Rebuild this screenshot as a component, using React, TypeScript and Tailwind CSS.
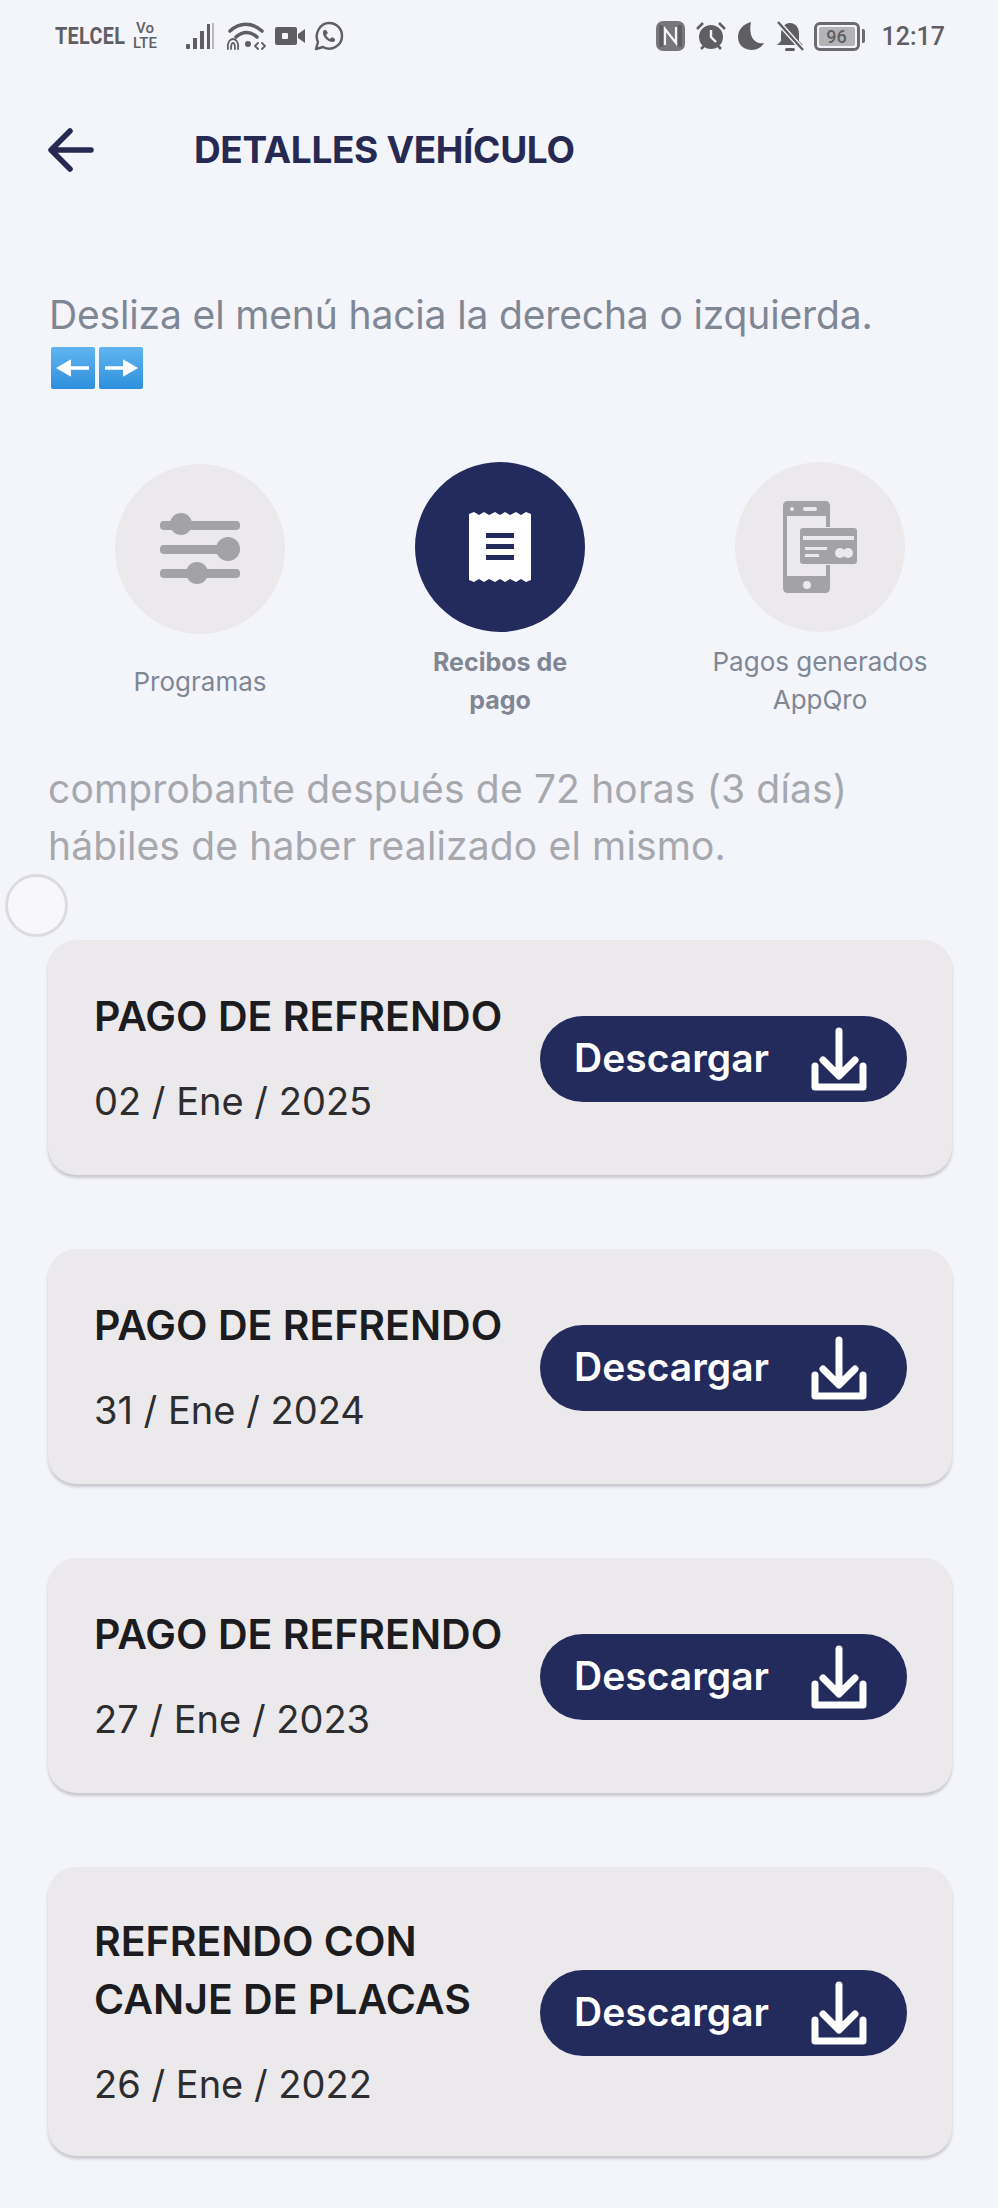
const navy = 'bg-[#232a5c]';

function StatusLeft() {
  return (
    <div className="flex items-center text-[#5f5f63]">
      <span className="w-[71px] origin-left scale-x-[0.86] text-[23px] leading-none font-bold font-['Roboto',sans-serif] tracking-[0.4px]">TELCEL</span>
      <div className="ml-[6px] flex w-[26px] flex-col items-center text-[15px] leading-[15px] font-medium font-['Roboto',sans-serif]">
        <span>Vo</span>
        <span>LTE</span>
      </div>
      <svg className="ml-[28px] h-[30px] w-[30px]" viewBox="0 0 30 30" fill="currentColor">
        <rect x="0" y="23" width="4" height="5" rx="1" />
        <rect x="7" y="17" width="4" height="11" />
        <rect x="14" y="10" width="4" height="18" />
        <rect x="21" y="3" width="3" height="25" />
        <rect x="26" y="2" width="2" height="26" opacity="0.4" />
      </svg>
      <svg className="ml-[9px] h-[32px] w-[42px]" viewBox="0 0 42 32" fill="none" stroke="currentColor" strokeWidth="3.6" strokeLinecap="round">
        <path d="M5 11C15 2 27 2 37 11" />
        <path d="M11 17C18 11 25 11 32 17" />
        <circle cx="23" cy="24" r="3" fill="currentColor" stroke="none" />
        <path d="M3 29C2 22 5 19 8 19S14 22 13 29" strokeWidth="1.8" />
        <path d="M6 29C6 25 7 23 8 23S10 25 10 29" strokeWidth="1.8" />
        <path d="M33 23L30 26L33 29M37 23L40 26L37 29" strokeWidth="1.8" />
      </svg>
      <svg className="ml-[8px] h-[20px] w-[30px]" viewBox="0 0 30 20" fill="currentColor">
        <path d="M2 1H20Q22 1 22 3V17Q22 19 20 19H2Q0 19 0 17V3Q0 1 2 1Z" />
        <path d="M23 8L30 3V17L23 12Z" />
        <rect x="7" y="7" width="6" height="6" rx="1" fill="#f4f4fb" />
      </svg>
      <svg className="ml-[9px] h-[30px] w-[30px]" viewBox="0 0 30 30" fill="none" stroke="currentColor">
        <path d="M2 28L4 21C0 13 6 2 15 2C23 2 28 8 28 15C28 24 18 31 9 26Z" strokeWidth="2.4" strokeLinejoin="round" />
        <path d="M10 9C8 11 9 15 12 18C15 21 19 22 21 20L21 18L18 16L16 18C14 17 13 16 12 14L14 12L12 9Z" fill="currentColor" stroke="none" />
      </svg>
    </div>
  );
}

function StatusRight() {
  return (
    <div className="flex items-center text-[#5f5f63]">
      <svg className="h-[30px] w-[29px]" viewBox="0 0 29 30">
        <rect x="0" y="0" width="29" height="30" rx="7" fill="#77777b" />
        <path d="M5 4V26M24 4V26" fill="none" stroke="#5f5f63" strokeWidth="4" />
        <path d="M9 24V8L20 22V6" fill="none" stroke="#f4f4fb" strokeWidth="2.2" />
      </svg>
      <svg className="ml-[10px] h-[30px] w-[32px]" viewBox="0 0 32 30" fill="currentColor">
        <circle cx="16" cy="16" r="12" />
        <path d="M16 9V16L21 21" fill="none" stroke="#f4f4fb" strokeWidth="2.4" />
        <path d="M2 8L8 2M30 8L24 2M6 28L9 25M26 28L23 25" fill="none" stroke="currentColor" strokeWidth="2.6" />
      </svg>
      <svg className="ml-[10px] h-[30px] w-[28px]" viewBox="0 0 28 30" fill="currentColor">
        <path d="M14 1C6 3 1 9 1 16C1 24 7 29 15 29C20 29 25 26 27 22C18 24 11 16 14 1Z" />
      </svg>
      <svg className="ml-[10px] h-[32px] w-[30px]" viewBox="0 0 30 32" fill="currentColor">
        <path d="M15 3C9 3 6 8 6 14V21L2 25H28L24 21V14C24 8 21 3 15 3Z" />
        <rect x="10" y="28" width="10" height="3" rx="1.5" />
        <path d="M3 2L28 30" stroke="#f4f4fb" strokeWidth="5" />
        <path d="M3 2L28 30" stroke="currentColor" strokeWidth="2.4" />
      </svg>
      <div className="ml-[9px] flex items-center">
        <div className="flex h-[29px] w-[46px] items-center justify-center rounded-[6px] border-[3px] border-[#6c6c70] p-[2px]">
          <div className="flex h-full w-full items-center justify-center rounded-[2px] bg-[#b4b4b6] text-[18px] font-medium font-['Roboto',sans-serif]">96</div>
        </div>
        <div className="ml-[2px] h-[14px] w-[3px] rounded-r-[2px] bg-[#6c6c70]" />
      </div>
      <span className="ml-[17px] text-[25px] leading-none font-medium font-['Roboto',sans-serif]">12:17</span>
    </div>
  );
}

function SlidersIcon() {
  return (
    <svg className="h-[72px] w-[80px]" viewBox="0 0 80 72" fill="#a3a3a5">
      <rect x="0" y="8" width="80" height="9" rx="4" />
      <circle cx="21" cy="11" r="11" />
      <rect x="0" y="32" width="80" height="9" rx="4" />
      <circle cx="68" cy="36" r="12" />
      <rect x="0" y="56" width="80" height="9" rx="4" />
      <circle cx="37" cy="60" r="11" />
    </svg>
  );
}

function ReceiptIcon() {
  return (
    <svg className="h-[70px] w-[62px]" viewBox="0 0 62 70">
      <path d="M0 2L5 0L10 3L15 0L20 3L26 0L31 3L36 0L41 3L47 0L52 3L57 0L62 2V68L57 70L52 67L47 70L41 67L36 70L31 67L26 70L20 67L15 70L10 67L5 70L0 68Z" fill="#ffffff" />
      <rect x="17" y="21" width="28" height="5" fill="#232a5c" />
      <rect x="17" y="32" width="28" height="5" fill="#232a5c" />
      <rect x="17" y="43" width="28" height="5" fill="#232a5c" />
    </svg>
  );
}

function PhoneCardIcon() {
  return (
    <svg className="h-[92px] w-[74px]" viewBox="0 0 74 92">
      <path d="M5 0H42Q47 0 47 5V26H43V15H4V75H43V64H47V87Q47 92 42 92H5Q0 92 0 87V5Q0 0 5 0Z" fill="#a3a3a5" />
      <rect x="20" y="6" width="14" height="4" rx="2" fill="#ebe9eb" />
      <circle cx="9" cy="8" r="2" fill="#ebe9eb" />
      <circle cx="24" cy="84" r="4" fill="#ebe9eb" />
      <rect x="17" y="27" width="57" height="36" rx="3" fill="#a3a3a5" />
      <rect x="20" y="35" width="51" height="4" fill="#ebe9eb" />
      <rect x="22" y="46" width="22" height="3" fill="#ebe9eb" />
      <rect x="22" y="53" width="14" height="3" fill="#ebe9eb" />
      <circle cx="57" cy="52" r="5" fill="#ebe9eb" />
      <circle cx="65" cy="52" r="5" fill="#ebe9eb" />
    </svg>
  );
}

function DownloadIcon() {
  return (
    <svg className="h-[64px] w-[56px]" viewBox="0 0 56 64" fill="none" stroke="#ffffff" strokeLinecap="round" strokeLinejoin="round">
      <path d="M28 4V48M12 33L28 49L44 33" strokeWidth="7" />
      <path d="M4 39V60H52V39" strokeWidth="7" />
    </svg>
  );
}

function MenuItem({ label, active, top, icon }: { label: React.ReactNode; active?: boolean; top: string; icon: React.ReactNode }) {
  return (
    <div className={`flex flex-col items-center ${top}`}>
      <div className={`flex h-[170px] w-[170px] items-center justify-center rounded-full ${active ? navy : 'bg-[#ebe9eb]'}`}>{icon}</div>
      {label}
    </div>
  );
}

function ReceiptCard({ title, date }: { title: string[]; date: string }) {
  return (
    <div className={`flex items-center justify-between rounded-[28px] bg-[#ebe9eb] pr-[45px] pl-[46px] shadow-[0_3px_3px_rgba(0,0,0,0.18)] ${title.length > 1 ? 'pt-[45px] pb-[43px]' : 'pt-[47px] pb-[45px]'}`}>
      <div>
        <div className="text-[41px] leading-[58px] font-semibold text-[#1c1c20]">
          {title.map((line) => (
            <div key={line}>{line}</div>
          ))}
        </div>
        <div className="mt-[27px] text-[38px] leading-[58px] text-[#2d2d30]">{date}</div>
      </div>
      <button type="button" className={`flex h-[86px] w-[367px] items-center justify-between rounded-full ${navy} pr-[40px] pl-[34px] text-[39px] font-semibold text-white`}>
        Descargar
        <DownloadIcon />
      </button>
    </div>
  );
}

export default function App() {
  return (
    <div className="relative min-h-[2208px] overflow-hidden bg-[#f4f4fb] font-['Inter',sans-serif]">
      <div className="flex h-[72px] items-center justify-between pr-[53px] pl-[55px]">
        <StatusLeft />
        <StatusRight />
      </div>

      <div className="mt-[36px] flex h-[84px] items-center pl-[48px]">
        <svg className="h-[44px] w-[46px]" viewBox="0 0 46 44" fill="none" stroke="#262a52" strokeWidth="5.5" strokeLinecap="round" strokeLinejoin="round">
          <path d="M43 22H4M22 3L3 22L22 41" />
        </svg>
        <h1 className="ml-[100px] text-[37px] font-bold tracking-[-0.35px] text-[#262a52]">DETALLES VEHÍCULO</h1>
      </div>

      <p className="mt-[99px] pl-[49px] text-[39px] leading-[48px] tracking-[-0.15px] text-[#7f8794]">Desliza el menú hacia la derecha o izquierda.</p>
      <div className="mt-[8px] flex gap-[4px] pl-[51px]">
        {['M38 22H20V14L5 24L20 34V26H38Z', 'M6 22H24V14L39 24L24 34V26H6Z'].map((d) => (
          <svg key={d} className="h-[42px] w-[44px] rounded-[2px] bg-gradient-to-b from-[#5fb5ef] to-[#2e8fdc]" viewBox="0 0 44 48" preserveAspectRatio="none" fill="#ffffff">
            <path d={d} />
          </svg>
        ))}
      </div>

      <div className="mt-[73px] flex h-[272px] pl-[50px]">
        <div className="w-[300px]">
          <MenuItem top="mt-[2px]" icon={<SlidersIcon />} label={<span className="mt-[29px] text-[26px] leading-[38px] text-[#7f8794]">Programas</span>} />
        </div>
        <div className="w-[300px]">
          <MenuItem
            active
            top=""
            icon={<ReceiptIcon />}
            label={
              <span className="mt-[11px] text-center text-[25px] leading-[38px] font-bold text-[#7f8794]">
                Recibos de
                <br />
                pago
              </span>
            }
          />
        </div>
        <div className="w-[340px]">
          <MenuItem
            top=""
            icon={<PhoneCardIcon />}
            label={
              <span className="mt-[11px] text-center text-[26px] leading-[38px] text-[#7f8794]">
                Pagos generados
                <br />
                AppQro
              </span>
            }
          />
        </div>
      </div>

      <p className="mt-[26px] pl-[48px] text-[39px] leading-[57px] tracking-[0.15px] text-[#a6a8ad]">
        comprobante después de 72 horas (3 días)
        <br />
        hábiles de haber realizado el mismo.
      </p>

      <div className="mt-[66px] flex flex-col gap-[74px] pr-[46px] pl-[48px]">
        <ReceiptCard title={['PAGO DE REFRENDO']} date="02 / Ene / 2025" />
        <ReceiptCard title={['PAGO DE REFRENDO']} date="31 / Ene / 2024" />
        <ReceiptCard title={['PAGO DE REFRENDO']} date="27 / Ene / 2023" />
        <ReceiptCard title={['REFRENDO CON', 'CANJE DE PLACAS']} date="26 / Ene / 2022" />
      </div>

      <div className="absolute top-[874px] left-[5px] h-[63px] w-[63px] rounded-full border-[3px] border-[#dcdce0] bg-[#f7f7fc]" />
    </div>
  );
}
